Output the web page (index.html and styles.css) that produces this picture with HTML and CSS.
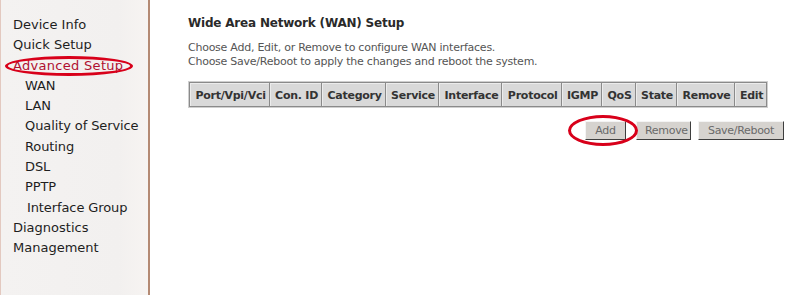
FILE: index.html
```html
<!DOCTYPE html>
<html>
<head>
<meta charset="utf-8">
<link rel="stylesheet" href="styles.css">
</head>
<body>
<div class="page">
  <nav class="menu">
    <a class="top">Device Info</a>
    <a class="top">Quick Setup</a>
    <a class="top active">Advanced Setup<span class="ring ring-nav"></span></a>
    <a class="sub">WAN</a>
    <a class="sub">LAN</a>
    <a class="sub">Quality of Service</a>
    <a class="sub">Routing</a>
    <a class="sub">DSL</a>
    <a class="sub">PPTP</a>
    <a class="sub sub2">Interface Group</a>
    <a class="top">Diagnostics</a>
    <a class="top">Management</a>
  </nav>
  <main class="content">
    <h1 class="title">Wide Area Network (WAN) Setup</h1>
    <p class="desc">Choose Add, Edit, or Remove to configure WAN interfaces.<br>Choose Save/Reboot to apply the changes and reboot the system.</p>
    <table class="wan">
      <tr>
        <th>Port/Vpi/Vci</th>
        <th>Con. ID</th>
        <th>Category</th>
        <th>Service</th>
        <th>Interface</th>
        <th>Protocol</th>
        <th>IGMP</th>
        <th>QoS</th>
        <th>State</th>
        <th>Remove</th>
        <th>Edit</th>
      </tr>
    </table>
    <div class="actions">
      <span class="btn-wrap"><button class="btn btn-add">Add</button><span class="ring ring-add"></span></span>
      <button class="btn btn-remove">Remove</button>
      <button class="btn btn-save">Save/Reboot</button>
    </div>
  </main>
</div>
</body>
</html>
```
FILE: styles.css
```css
html, body {
  margin: 0;
  padding: 0;
  background: #ffffff;
}
.page {
  display: flex;
  width: 795px;
  height: 295px;
  overflow: hidden;
}
.menu {
  width: 147px;
  flex: none;
  background: linear-gradient(to right, #f4f2f1 0%, #f2f0ef 80%, #f7f4f2 100%);
  border-left: 1px solid #e3c9c0;
  border-right: 2px solid #b48a74;
  padding-top: 15px;
  display: flex;
  flex-direction: column;
  font-family: "DejaVu Sans", Verdana, sans-serif;
  font-size: 13px;
  color: #1e1e1e;
}
.menu a {
  display: block;
  height: 20.3px;
  line-height: 20px;
  white-space: nowrap;
  position: relative;
}
.menu .top { padding-left: 12px; }
.menu .sub { padding-left: 24px; letter-spacing: -0.1px; }
.menu .sub2 { padding-left: 26px; }
.menu .active { color: #b01030; letter-spacing: 0.3px; }
.ring {
  position: absolute;
  border: 3px solid #d8001a;
  border-radius: 50%;
  pointer-events: none;
}
.ring-nav {
  left: 4px;
  top: 0;
  width: 122px;
  height: 14px;
}
.content {
  flex: 1;
  padding: 16px 0 0 38px;
  font-family: "DejaVu Sans", Verdana, sans-serif;
  color: #333;
}
.title {
  margin: 0;
  font-size: 12px;
  line-height: 14px;
  font-weight: bold;
  color: #2a2a2a;
  letter-spacing: -0.2px;
}
.desc {
  margin: 11px 0 0 0;
  font-size: 11px;
  line-height: 14px;
  color: #555;
  letter-spacing: -0.25px;
}
.wan {
  margin-top: 12px;
  border-collapse: separate;
  border-spacing: 1px;
  background: #8a8a8a;
  border: 1px solid #cfcfcf;
}
.wan th {
  background: #d9d9d9;
  font-size: 11px;
  font-weight: bold;
  color: #333;
  padding: 4px 3px 4px 4.4px;
  height: 14px;
  white-space: nowrap;
  letter-spacing: -0.25px;
  border-left: 1px solid #ececec;
  border-top: 1px solid #ececec;
}
.actions {
  display: flex;
  margin: 13px 0 0 397px;
  gap: 10px;
  align-items: center;
}
.btn-wrap {
  position: relative;
  display: inline-block;
}
.btn {
  font-family: "DejaVu Sans", Verdana, sans-serif;
  font-size: 11px;
  color: #6a6a6a;
  background: #d6d3cf;
  border: 1px solid;
  border-color: #f4f4f4 #3e3e3e #3e3e3e #f4f4f4;
  height: 19px;
  padding: 0 8px;
  letter-spacing: -0.3px;
  margin: 0;
  display: block;
}
.btn-add { width: 41px; }
.btn-remove { width: 55px; }
.btn-save { width: 86px; margin-left: -3px; }
.ring-add {
  left: -17px;
  top: -6px;
  width: 64px;
  height: 25px;
}
```
